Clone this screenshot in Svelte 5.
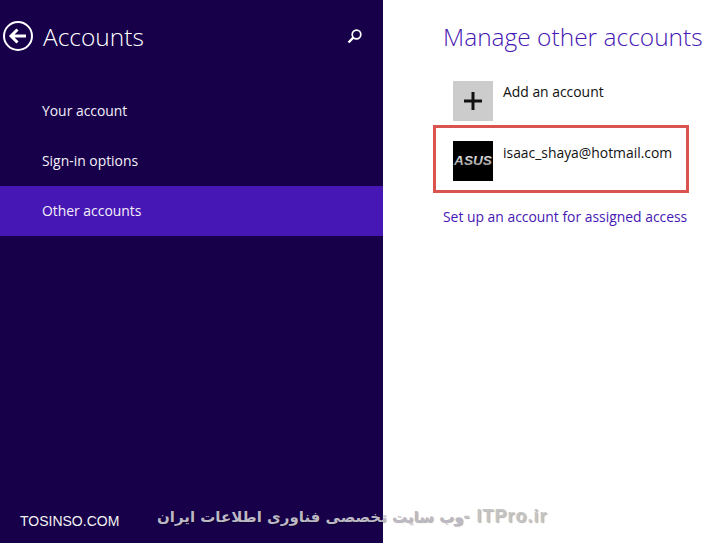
<script>
  const nav = [
    { label: 'Your account', active: false },
    { label: 'Sign-in options', active: false },
    { label: 'Other accounts', active: true }
  ];
</script>

<div class="screen">
  <aside class="side">
    <header class="head">
      <svg class="back" width="32" height="32" viewBox="0 0 32 32" fill="none" stroke="#fff">
        <circle cx="16" cy="16" r="14" stroke-width="2" />
        <path d="M24 16H9M15.500 9.500 9 16l6.500 6.500" stroke-width="3" />
      </svg>
      <h1>Accounts</h1>
      <svg class="search" width="16" height="16" viewBox="0 0 16 16" fill="none" stroke="#fff">
        <circle cx="9.500" cy="6.500" r="4.300" stroke-width="1.700" />
        <path d="M6.300 9.700 1.500 14.500" stroke-width="2.400" />
      </svg>
    </header>
    <nav class="nav">
      {#each nav as item}
        <div class="item" class:active={item.active}>{item.label}</div>
      {/each}
    </nav>
  </aside>

  <main class="content">
    <h2>Manage other accounts</h2>
    <div class="row add">
      <div class="tile plus">
        <svg width="20" height="20" viewBox="0 0 20 20"><path d="M10 1v18M1 10h18" stroke="#111" stroke-width="3" /></svg>
      </div>
      <span>Add an account</span>
    </div>
    <div class="row account">
      <div class="tile asus">
        <svg width="40" height="40" viewBox="0 0 40 40">
          <defs>
            <linearGradient id="asusFill" x1="0" y1="0" x2="0" y2="1">
              <stop offset="0" stop-color="#ffffff" />
              <stop offset="1" stop-color="#8a8a8a" />
            </linearGradient>
          </defs>
          <text class="asus-text" x="1" y="23.500" textLength="38" lengthAdjust="spacingAndGlyphs" fill="url(#asusFill)">ASUS</text>
        </svg>
      </div>
      <span>isaac_shaya@hotmail.com</span>
    </div>
    <div class="link">Set up an account for assigned access</div>
  </main>

  <div class="mark-left">TOSINSO.COM</div>
  <div class="mark-center" dir="ltr"><span class="fa" dir="rtl">وب سایت تخصصی فناوری اطلاعات ایران</span><span class="en"> - ITPro.ir</span></div>
</div>

<style>
  :global(body) {
    margin: 0;
    background: #fff;
  }
  .screen {
    position: relative;
    width: 716px;
    height: 543px;
    overflow: hidden;
    display: grid;
    grid-template-columns: 383px 1fr;
    font-family: "Open Sans", "Noto Sans", sans-serif;
  }
  .side {
    background: #170049;
    color: #fff;
  }
  .head {
    height: 86px;
    display: flex;
    align-items: flex-start;
    padding: 20px 20px 0 2px;
    box-sizing: border-box;
  }
  .back {
    flex: none;
  }
  h1 {
    margin: 0 0 0 9px;
    font-size: 24.500px;
    font-weight: 300;
    line-height: 33px;
    flex: 1;
  }
  .search {
    margin-top: 8px;
  }
  .item {
    height: 50px;
    line-height: 50px;
    padding-left: 42px;
    font-size: 13.900px;
    color: #f4f0fa;
  }
  .item.active {
    background: #4617b4;
  }
  .content {
    padding: 20px 0 0 60px;
    min-width: 0;
  }
  h2 {
    margin: 0;
    font-size: 24.500px;
    font-weight: 300;
    line-height: 33px;
    color: #4617b4;
    white-space: nowrap;
  }
  .row {
    display: flex;
    align-items: flex-start;
    gap: 10px;
    font-size: 13.900px;
    color: #111;
    line-height: 20px;
  }
  .row > span {
    white-space: nowrap;
    padding-top: 1px;
  }
  .add {
    margin: 28px 0 0 10px;
  }
  .tile {
    width: 40px;
    height: 40px;
    flex: none;
    display: flex;
    align-items: center;
    justify-content: center;
  }
  .plus {
    background: #cccccc;
  }
  .account {
    box-sizing: border-box;
    width: 256px;
    height: 68px;
    margin: 4px 0 0 -10px;
    padding: 13px 0 0 17px;
    border: 3px solid #d9534f;
  }
  .account > span {
    padding-top: 2px;
  }
  .asus {
    background: #000;
  }
  .asus-text {
    font-family: "Liberation Sans", sans-serif;
    font-weight: 700;
    font-style: italic;
    font-size: 13px;
  }
  .link {
    margin-top: 14px;
    font-size: 13.900px;
    line-height: 20px;
    color: #4617b4;
    white-space: nowrap;
  }
  .mark-left {
    position: absolute;
    left: 20px;
    top: 513px;
    font-family: "Liberation Sans", sans-serif;
    font-size: 14px;
    line-height: 16px;
    color: #f2f2f2;
  }
  .mark-center {
    position: absolute;
    left: 157px;
    top: 504px;
    display: flex;
    align-items: baseline;
    white-space: pre;
    color: #bdb9c4;
    text-shadow: 1px 1px 1px rgba(0, 0, 0, 0.3);
    line-height: 24px;
  }
  .fa {
    font-family: "DejaVu Sans", sans-serif;
    font-size: 15px;
    font-weight: 700;
  }
  .en {
    font-family: "Liberation Sans", sans-serif;
    font-size: 18px;
    font-weight: 700;
    letter-spacing: 1px;
    color: #c4c4c4;
  }
</style>
